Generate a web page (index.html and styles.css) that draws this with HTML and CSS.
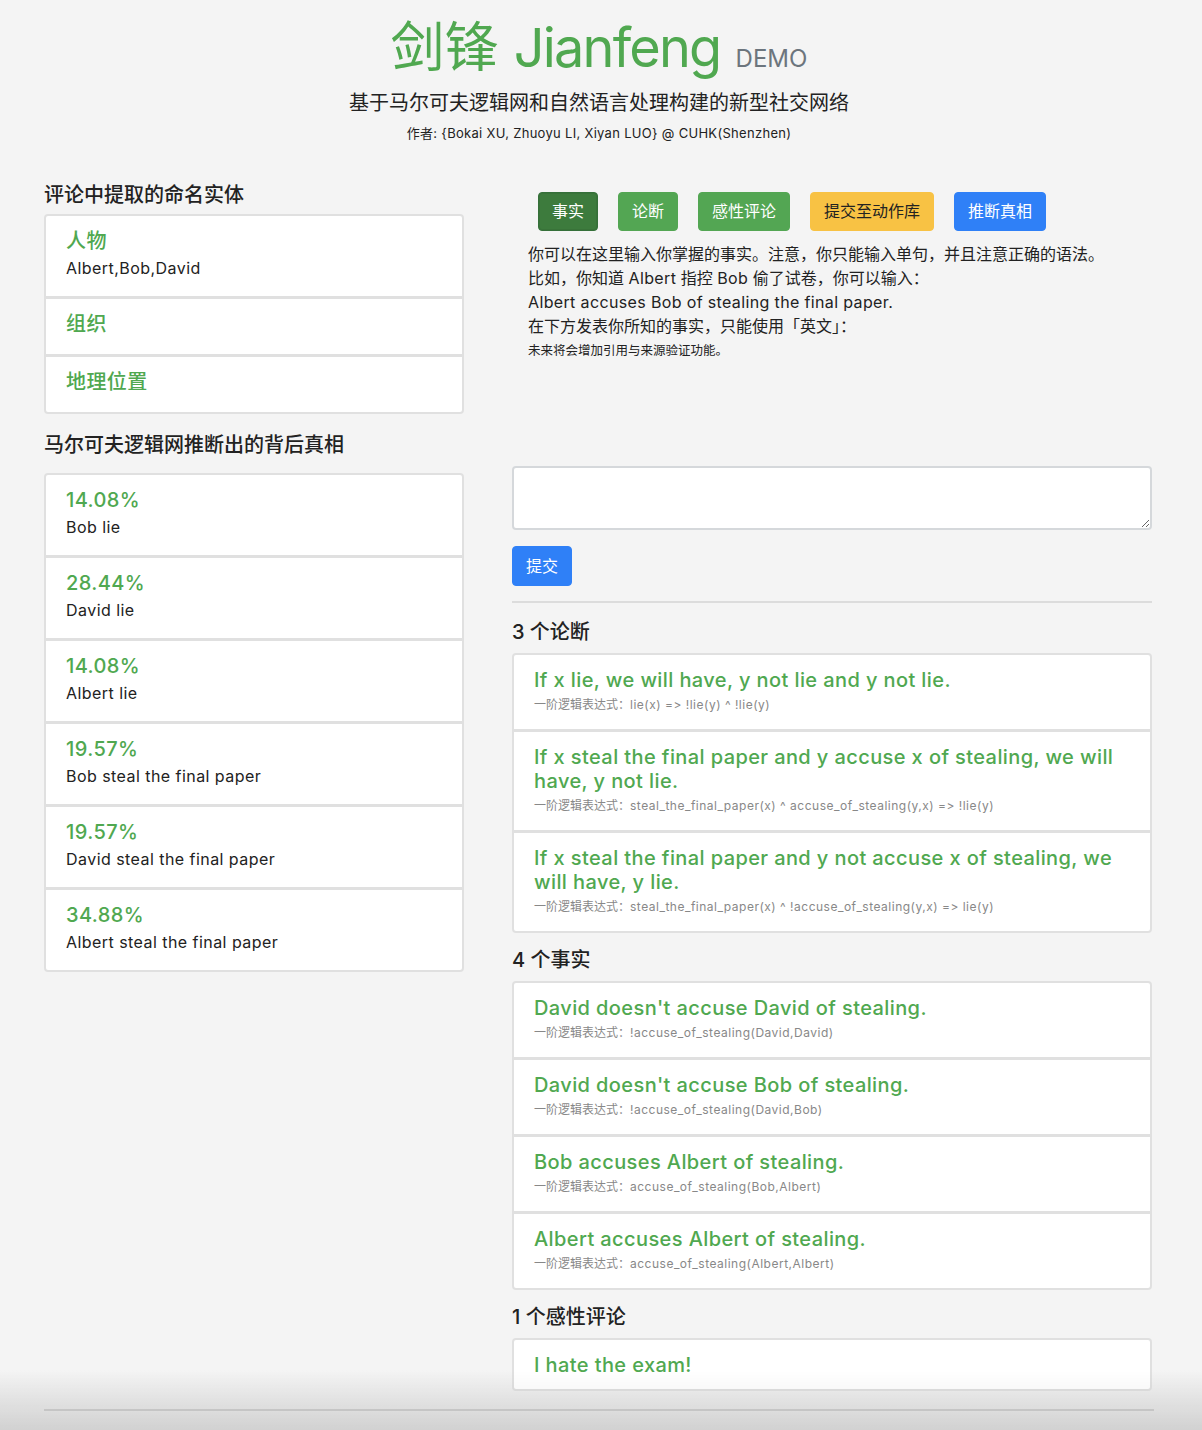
FILE: index.html
```html
<!DOCTYPE html>
<html lang="zh-CN">
<head>
<meta charset="utf-8">
<title>剑锋 Jianfeng DEMO</title>
<link rel="stylesheet" href="styles.css">
</head>
<body>
<div class="page">
  <header class="hero">
    <h1 class="brand">剑锋 <span class="brand-latin">Jianfeng</span> <small class="demo">DEMO</small></h1>
    <p class="tagline">基于马尔可夫逻辑网和自然语言处理构建的新型社交网络</p>
    <p class="authors">作者: {Bokai XU, Zhuoyu LI, Xiyan LUO} @ CUHK(Shenzhen)</p>
  </header>

  <main class="layout">
    <section class="side">
      <h2 class="section-title entities-title">评论中提取的命名实体</h2>
      <ul class="card-list">
        <li class="item">
          <h3 class="item-title">人物</h3>
          <p class="item-text">Albert,Bob,David</p>
        </li>
        <li class="item bare">
          <h3 class="item-title">组织</h3>
        </li>
        <li class="item bare">
          <h3 class="item-title">地理位置</h3>
        </li>
      </ul>

      <h2 class="section-title truth-title">马尔可夫逻辑网推断出的背后真相</h2>
      <ul class="card-list truth-list">
        <li class="item"><h3 class="item-title">14.08%</h3><p class="item-text">Bob lie</p></li>
        <li class="item"><h3 class="item-title">28.44%</h3><p class="item-text">David lie</p></li>
        <li class="item"><h3 class="item-title">14.08%</h3><p class="item-text">Albert lie</p></li>
        <li class="item"><h3 class="item-title">19.57%</h3><p class="item-text">Bob steal the final paper</p></li>
        <li class="item"><h3 class="item-title">19.57%</h3><p class="item-text">David steal the final paper</p></li>
        <li class="item"><h3 class="item-title">34.88%</h3><p class="item-text">Albert steal the final paper</p></li>
      </ul>
    </section>

    <section class="main">
      <div class="tabs">
        <button class="btn btn-green active">事实</button>
        <button class="btn btn-green">论断</button>
        <button class="btn btn-green">感性评论</button>
        <button class="btn btn-yellow">提交至动作库</button>
        <button class="btn btn-blue">推断真相</button>
      </div>

      <div class="intro">
        <p>你可以在这里输入你掌握的事实。注意，你只能输入单句，并且注意正确的语法。</p>
        <p>比如，你知道 <span class="latin">Albert</span> 指控 <span class="latin">Bob</span> 偷了试卷，你可以输入：</p>
        <p class="latin">Albert accuses Bob of stealing the final paper.</p>
        <p>在下方发表你所知的事实，只能使用「英文」：</p>
        <p class="note">未来将会增加引用与来源验证功能。</p>
      </div>

      <textarea class="entry"></textarea>
      <div class="submit-row"><button class="btn btn-blue">提交</button></div>
      <hr class="divider">

      <h2 class="section-title list-head first-head">3 个论断</h2>
      <ul class="card-list">
        <li class="item">
          <h3 class="item-title">If x lie, we will have, y not lie and y not lie.</h3>
          <p class="formula">一阶逻辑表达式：<span class="expr">lie(x) =&gt; !lie(y) ^ !lie(y)</span></p>
        </li>
        <li class="item">
          <h3 class="item-title">If x steal the final paper and y accuse x of stealing, we will have, y not lie.</h3>
          <p class="formula">一阶逻辑表达式：<span class="expr">steal_the_final_paper(x) ^ accuse_of_stealing(y,x) =&gt; !lie(y)</span></p>
        </li>
        <li class="item">
          <h3 class="item-title">If x steal the final paper and y not accuse x of stealing, we will have, y lie.</h3>
          <p class="formula">一阶逻辑表达式：<span class="expr">steal_the_final_paper(x) ^ !accuse_of_stealing(y,x) =&gt; lie(y)</span></p>
        </li>
      </ul>

      <h2 class="section-title list-head">4 个事实</h2>
      <ul class="card-list">
        <li class="item">
          <h3 class="item-title">David doesn't accuse David of stealing.</h3>
          <p class="formula">一阶逻辑表达式：<span class="expr">!accuse_of_stealing(David,David)</span></p>
        </li>
        <li class="item">
          <h3 class="item-title">David doesn't accuse Bob of stealing.</h3>
          <p class="formula">一阶逻辑表达式：<span class="expr">!accuse_of_stealing(David,Bob)</span></p>
        </li>
        <li class="item">
          <h3 class="item-title">Bob accuses Albert of stealing.</h3>
          <p class="formula">一阶逻辑表达式：<span class="expr">accuse_of_stealing(Bob,Albert)</span></p>
        </li>
        <li class="item">
          <h3 class="item-title">Albert accuses Albert of stealing.</h3>
          <p class="formula">一阶逻辑表达式：<span class="expr">accuse_of_stealing(Albert,Albert)</span></p>
        </li>
      </ul>

      <h2 class="section-title list-head">1 个感性评论</h2>
      <ul class="card-list">
        <li class="item single">
          <h3 class="item-title">I hate the exam!</h3>
        </li>
      </ul>
    </section>
  </main>

  <hr class="footer-rule">
</div>
<div class="fade"></div>
</body>
</html>
```

FILE: styles.css
```css
html {
  background: linear-gradient(to bottom, #f4f4f4 0, #f4f4f4 1370px, #e2e2e2 1430px) no-repeat;
  background-color: #f4f4f4;
  min-height: 1430px;
}

body {
  margin: 0;
  font-family: Inter, "Noto Sans CJK SC", sans-serif;
  font-feature-settings: "calt" 0, "liga" 0;
  color: #222;
  background: transparent;
}

.page {
  width: 1110px;
  margin-left: 44px;
}

/* header */
.hero {
  text-align: center;
  padding-top: 15px;
}

.brand {
  margin: 0;
  font-size: 54px;
  line-height: 65px;
  font-weight: 400;
  color: #50a850;
}

.brand-latin {
  letter-spacing: -1.8px;
}

.demo {
  font-size: 24px;
  line-height: 1;
  color: #6c757d;
  font-weight: 400;
}

.tagline {
  margin: 11px 0 0;
  font-size: 20px;
  line-height: 24px;
  color: #222;
}

.authors {
  margin: 9px 0 0;
  font-size: 13px;
  line-height: 18px;
  letter-spacing: 0.3px;
  color: #222;
}

/* layout */
.layout {
  display: grid;
  grid-template-columns: 420px 640px;
  column-gap: 48px;
  align-items: start;
  margin-top: 41px;
}

.section-title {
  margin: 0 0 16px;
  font-size: 20px;
  line-height: 24px;
  font-weight: 500;
  color: #222;
}

.entities-title {
  margin-bottom: 7px;
}

.truth-title {
  margin-top: 19px;
}

/* card lists */
.card-list {
  list-style: none;
  margin: 0;
  padding: 0;
  background: #fff;
  border: 2px solid #e0e0e0;
  border-radius: 4px;
}

.item {
  padding: 13px 20px 16px;
}

.item + .item {
  border-top: 3px solid #e0e0e0;
}

.item.bare {
  padding-bottom: 18px;
}

.item.single {
  padding-bottom: 12px;
}

.item-title {
  margin: 0;
  font-size: 20px;
  line-height: 24px;
  font-weight: 500;
  letter-spacing: 0.4px;
  color: #50a850;
}

.item-text {
  margin: 3px 0 0;
  font-size: 16px;
  line-height: 24px;
  letter-spacing: 0.45px;
  color: #222;
}

.formula {
  margin: 4px 0 0;
  font-size: 12px;
  line-height: 17px;
  color: #888;
}

.expr {
  letter-spacing: 0.5px;
}

/* right column */
.tabs {
  display: flex;
  gap: 20px;
  margin-top: 9px;
  padding-left: 26px;
}

.btn {
  font-family: inherit;
  font-size: 16px;
  line-height: 23px;
  padding: 7px 13px;
  border: 1px solid transparent;
  border-radius: 4px;
  cursor: pointer;
}

.btn-green {
  background: #53a653;
  border-color: #53a653;
  color: #fff;
}

.btn-green.active {
  background: #3d7b3d;
  border-color: #35703a;
  box-shadow: inset 0 0 0 1px rgba(0, 0, 0, 0.06);
}

.btn-yellow {
  background: #f8c244;
  border-color: #f8c244;
  color: #222;
}

.btn-blue {
  background: #2f80f7;
  border-color: #2f80f7;
  color: #fff;
}

.intro {
  margin-top: 11px;
  padding-left: 16px;
}

.intro p {
  margin: 0;
  font-size: 16px;
  line-height: 24px;
  color: #222;
}

.intro .latin {
  letter-spacing: 0.36px;
}

.intro .note {
  margin-top: 3px;
  font-size: 12.5px;
  line-height: 20px;
}

.entry {
  display: block;
  box-sizing: border-box;
  width: 640px;
  height: 64px;
  margin-top: 105px;
  border: 2px solid #d5d8db;
  border-radius: 4px;
  background: #fff;
  font-family: inherit;
  font-size: 16px;
  padding: 6px 12px;
}

.submit-row {
  margin-top: 16px;
}

.submit-row .btn {
  line-height: 24px;
}

.divider {
  margin: 15px 0 0;
  border: 0;
  border-top: 2px solid #dcdcdc;
}

.list-head {
  margin-top: 15px;
  margin-bottom: 9px;
}

.first-head {
  margin-top: 17px;
}

.footer-rule {
  margin: 18px 0 0;
  border: 0;
  border-top: 2px solid #cfcfcf;
}

.fade {
  position: fixed;
  left: 0;
  right: 0;
  bottom: 0;
  height: 60px;
  background: linear-gradient(to bottom, rgba(0, 0, 0, 0), rgba(0, 0, 0, 0.07));
  pointer-events: none;
}
```
